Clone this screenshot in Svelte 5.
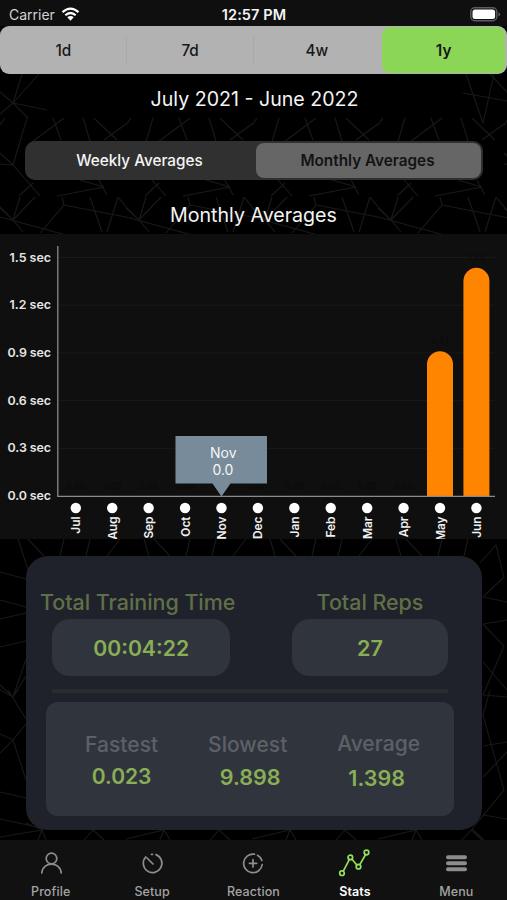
<script lang="ts">
    let ranges = ['1d', '7d', '4w', '1y'];
    let range: string = '1y';
    let modes = ['Weekly', 'Monthly'];
    let mode: string = 'Monthly';
    let selected: number = 4;

    let months = [
        {name: 'Jul', value: 0},
        {name: 'Aug', value: 0},
        {name: 'Sep', value: 0},
        {name: 'Oct', value: 0},
        {name: 'Nov', value: 0},
        {name: 'Dec', value: 0},
        {name: 'Jan', value: 0},
        {name: 'Feb', value: 0},
        {name: 'Mar', value: 0},
        {name: 'Apr', value: 0},
        {name: 'May', value: 0.91},
        {name: 'Jun', value: 1.435},
    ];
    let ticks = [1.5, 1.2, 0.9, 0.6, 0.3, 0];
    let totals = [
        {label: 'Total Training Time', value: '00:04:22', cls: 'time'},
        {label: 'Total Reps', value: '27', cls: 'reps'},
    ];
    let speeds = [
        {label: 'Fastest', value: '0.023', cls: 'fast'},
        {label: 'Slowest', value: '9.898', cls: 'slow'},
        {label: 'Average', value: '1.398', cls: 'avg'},
    ];
    let tabs = ['Profile', 'Setup', 'Reaction', 'Stats', 'Menu'];
    let tab: string = 'Stats';

    // chart geometry
    const base = 262;
    const toX = (i) => 75.8 + i * 36.42;
    const toY = (v) => base - v * 159;
    const bar = (i, v) => {
        const x = toX(i) - 13;
        const y = toY(v);
        return `M${x} ${base}V${y + 13}a13 13 0 0 1 26 0V${base}Z`;
    };
</script>

<main>
    <svg class="web" width="507" height="900" aria-hidden="true">
        <defs>
            <pattern id="net" width="126" height="79" patternUnits="userSpaceOnUse" y="118">
                <path d="M27 0L13 47L0 35M13 47L0 46M13 47L40 78M53 0L61 22M64 0L32 24M83 0L90 23M94 0L117 22M126 6L104 22M57 78L104 69L80 62M99 62L107 77M19 78L33 65M0 7L5 0" />
            </pattern>
            <pattern id="low" width="126" height="79" patternUnits="userSpaceOnUse" y="197">
                <path d="M20 0L13 23L35 0M0 11L13 23L23 35M40 36L64 8L62 0M64 8L126 20M0 20L66 38M90 0L102 35M118 0L107 35M118 0L126 10M0 10L13 23" />
            </pattern>
        </defs>
        <path d="M22 74L13 103L39 74M0 92L13 103L28 118M13 103L47 110M13 103L0 114M466 74L483 123L494 74M463 93L507 101M490 74L507 92" />
        <rect y="118" width="507" height="79" fill="url(#net)" />
        <rect y="197" width="507" height="38" fill="url(#low)" />
        <path d="M18 539L28 570M28 539L44 556M64 539L60 556M90 539L86 556M107 556L120 539M144 539L149 556M154 539L170 556M190 539L186 556M216 539L212 556M233 556L246 539M270 539L275 556M280 539L296 556M316 539L312 556M342 539L338 556M359 556L372 539M396 539L401 556M406 539L422 556M442 539L438 556M468 539L464 556" />
        <path d="M0 572L26 579M0 600L26 607M0 619L26 613M0 647L26 641M26 659L13 697L0 685M26 676L13 697L0 690M13 697L18 690M26 724L13 740L0 753M8 690L26 719M13 740L0 734M13 740L26 780M0 792L26 798M0 819L42 828M0 837L42 830L26 823" />
        <path d="M496 545L504 577L483 597L507 602M480 563L496 545M483 624L507 620M483 624L504 646L483 695M483 662L507 690M490 690L483 715L504 790L472 829L484 840M483 777L507 752M483 746L507 742M483 695L507 697M483 815L507 819" />
        <path d="M38 840L42 830L46 840M84 840L93 830L104 840M126 839L164 830L170 840M164 830L160 840M210 840L219 830L230 840M252 839L290 830L296 840M290 830L286 840M336 840L345 830L356 840M378 839L416 830L422 840M416 830L412 840M462 840L471 830L482 840" />
    </svg>

    <header>
        <span class="carrier">Carrier</span>
        <svg class="wifi" width="19" height="15" viewBox="0 0 19 15">
            <path d="M1.5 5.2Q9.500 -1.800 17.500 5.200M4.300 8.300Q9.500 3.700 14.700 8.300" />
            <path class="dot" d="M6.300 10.300Q9.500 7.700 12.700 10.300L9.500 13.700Z" />
        </svg>
        <span class="clock">12:57 PM</span>
        <svg class="battery" width="31" height="15" viewBox="0 0 31 15">
            <rect class="shell" x=".8" y=".8" width="26" height="13" rx="4" />
            <rect class="charge" x="2.500" y="2.500" width="22.600" height="9.600" rx="2.500" />
            <path class="cap" d="M28.500 5q3 2.300 0 4.600Z" />
        </svg>
    </header>

    <nav class="ranges">
        {#each ranges as r}
            <button class:on={r === range} on:click={() => range = r}>{r}</button>
        {/each}
    </nav>

    <h1>July 2021 - June 2022</h1>

    <div class="modes">
        {#each modes as m}
            <button class:on={m === mode} on:click={() => mode = m}>{m} Averages</button>
        {/each}
    </div>

    <h2>{mode} Averages</h2>

    <svg class="chart" width="507" height="305" viewBox="0 0 507 305">
        {#each ticks as t}
            {#if t > 0}
                <line class="grid" x1="58" x2="495" y1={toY(t)} y2={toY(t)} />
            {/if}
            <text class="tick" x={t > 1 ? 9.5 : 7.5} y={toY(t) + 4} textLength={t > 1 ? 41.5 : 43.5}>{t.toFixed(1)} sec</text>
        {/each}
        {#each months as m, i}
            <text class="ghost" x={toX(i)} y={toY(m.value) - 7}>{m.value.toFixed(2)}</text>
            {#if m.value > 0}
                <path class="bar" d={bar(i, m.value)} />
            {/if}
        {/each}
        <path class="axis" d="M57.800 12V262.300H495" />
        {#each months as m, i}
            <circle cx={toX(i)} cy="274" r="5.200" fill="#fff" />
            <text class="month" transform="translate({toX(i) + 4.500} 282.500) rotate(-90)">{m.name}</text>
        {/each}
        <path class="tip" d="M{toX(selected) - 46} 202h91.500v47.500h-36.500l-9 13l-9 -13h-37Z" />
        <text class="tiptext" x={toX(selected) + 1.800} y="224">{months[selected].name}</text>
        <text class="tiptext" x={toX(selected) + 1.500} y="241">{months[selected].value.toFixed(1)}</text>
    </svg>

    <section class="card">
        <div class="totals">
            {#each totals as t}
                <div class="total {t.cls}">
                    <p>{t.label}</p>
                    <div class="pill">{t.value}</div>
                </div>
            {/each}
        </div>
        <div class="rule"></div>
        <div class="speeds">
            {#each speeds as s}
                <div class="speed {s.cls}">
                    <p>{s.label}</p>
                    <b>{s.value}</b>
                </div>
            {/each}
        </div>
    </section>

    <footer>
        {#each tabs as t}
            <button class:on={t === tab} on:click={() => tab = t}>
                <svg width="34" height="32" viewBox="0 0 34 32">
                    {#if t === 'Profile'}
                        <circle cx="17.500" cy="11.500" r="5.300" />
                        <path d="M7.800 26C8.500 14.200 26.500 14.200 27.200 26" />
                    {:else if t === 'Setup'}
                        <path d="M10.700 10A9.300 9.300 0 1 0 21 7.600M12 11L18 17" />
                        <path d="M16.500 7.300h1" />
                    {:else if t === 'Reaction'}
                        <path d="M18.500 7.200A9.300 9.300 0 1 0 26.200 17.500M21.500 8.300A9.300 9.300 0 0 1 25.900 13.500M17 12.700v7.200M13.400 16.300h7.200" />
                    {:else if t === 'Stats'}
                        <path d="M5.200 24.300L11.400 12.400M14 12.300L19 18.200M21.800 17.700L27.600 7.500" />
                        <circle cx="4" cy="26.200" r="2.300" />
                        <circle cx="12.300" cy="10.400" r="2.300" />
                        <circle cx="20.500" cy="19.700" r="2.300" />
                        <circle cx="28.500" cy="5.500" r="2.300" />
                    {:else}
                        <path class="lines" d="M9 10.300h17M9 16.300h17M9 22.300h17" />
                    {/if}
                </svg>
                <span>{t}</span>
            </button>
        {/each}
    </footer>
</main>

<style>
    :global(body) {
        margin: 0;
        background: #000;
    }
    main {
        position: relative;
        isolation: isolate;
        width: 507px;
        height: 900px;
        overflow: hidden;
        display: flex;
        flex-direction: column;
        background: #000;
        color: #f4f4f4;
        font-family: Inter, "Liberation Sans", sans-serif;
    }
    .web {
        position: absolute;
        top: 0;
        left: 0;
        z-index: -1;
    }
    .web path {
        fill: none;
        stroke: #171919;
        stroke-width: 1.1;
    }
    button {
        border: 0;
        margin: 0;
        padding: 0;
        background: none;
        color: inherit;
        font-family: inherit;
    }
    p, h1, h2 {
        margin: 0;
    }
    header {
        height: 26px;
        flex: none;
        display: grid;
        grid-template-columns: 47px 1fr auto 1fr;
        align-items: center;
        padding: 2px 6px 0 9px;
        box-sizing: border-box;
        background: #0f0f0f;
        font-size: 14px;
    }
    .carrier {
        color: #d2d2d2;
        white-space: nowrap;
    }
    .wifi {
        margin-left: 5px;
    }
    .wifi path {
        fill: none;
        stroke: #fff;
        stroke-width: 2.2;
    }
    .wifi .dot {
        fill: #fff;
        stroke: none;
    }
    .clock {
        font-weight: 600;
        font-size: 14.5px;
        letter-spacing: .1px;
        margin: 0 22px 0 -27px;
    }
    .battery {
        justify-self: end;
    }
    .shell {
        fill: none;
        stroke: #5c5c5c;
        stroke-width: 1.4;
    }
    .charge {
        fill: #fff;
    }
    .cap {
        fill: #666;
    }
    .ranges {
        height: 48px;
        flex: none;
        display: grid;
        grid-template-columns: repeat(4, 1fr);
        background: #b2b2b2;
        border-radius: 9px;
    }
    .ranges button {
        color: #181818;
        font-size: 15.3px;
        font-weight: 500;
        background: linear-gradient(#a9a9a9, #a9a9a9) right center / 1px 28px no-repeat;
    }
    .ranges button:nth-child(3) {
        background: none;
    }
    .ranges button.on {
        margin: 1px 2px 1px 2px;
        border-radius: 8px;
        background: #8cd657;
        font-weight: 600;
    }
    h1, h2 {
        font-size: 19.6px;
        font-weight: 400;
        text-align: center;
        line-height: 24px;
    }
    h1 {
        margin-top: 13px;
        padding-left: 2px;
    }
    .modes {
        height: 39px;
        flex: none;
        margin: 30px 24px 0 25px;
        padding: 2px;
        box-sizing: border-box;
        display: grid;
        grid-template-columns: 229px 1fr;
        background: #303030;
        border-radius: 10px;
    }
    .modes button {
        font-size: 15.3px;
        font-weight: 500;
        padding-right: 4px;
    }
    .modes button.on {
        border-radius: 8px;
        background: #666;
        color: #131313;
        font-weight: 600;
        padding-right: 2px;
    }
    h2 {
        margin-top: 23px;
    }
    .chart {
        flex: none;
        margin-top: 7px;
        background: #0f0f0f;
    }
    .grid {
        stroke: #191919;
    }
    .tick {
        fill: #e6e6e6;
        font-size: 12.4px;
        font-weight: 600;
    }
    .ghost {
        fill: #0a0a0a;
        font-size: 9px;
        text-anchor: middle;
    }
    .bar {
        fill: #ff8400;
    }
    .axis {
        fill: none;
        stroke: #8b8b8b;
        stroke-width: 1.3;
    }
    .month {
        fill: #f0f0f0;
        font-size: 12px;
        font-weight: 600;
        letter-spacing: -.1px;
        text-anchor: end;
    }
    .tip {
        fill: #778b9a;
    }
    .tiptext {
        fill: #f5f5f5;
        font-size: 14px;
        text-anchor: middle;
    }
    .card {
        height: 274px;
        flex: none;
        margin: 17px 25px 0 26px;
        padding: 33px 28px 14px 20px;
        box-sizing: border-box;
        display: flex;
        flex-direction: column;
        background: #1f222a;
        border-radius: 22px;
    }
    .totals {
        display: flex;
        justify-content: space-between;
        margin: 0 6px 0 -6px;
    }
    .total {
        display: flex;
        flex-direction: column;
        align-items: center;
        color: #5f7049;
        font-size: 21.5px;
        font-weight: 500;
    }
    .total p {
        line-height: 27px;
        letter-spacing: -.05px;
        white-space: nowrap;
    }
    .pill {
        height: 57px;
        margin-top: 3px;
        border-radius: 18px;
        background: #30353d;
        color: #8aae55;
        font-weight: 600;
        line-height: 58px;
        text-align: center;
    }
    .time .pill {
        width: 178px;
        margin-left: 7px;
        font-size: 21.2px;
    }
    .reps .pill {
        width: 156px;
    }
    .rule {
        height: 4px;
        margin: 13px 6px 0;
        background: #2b2c30;
    }
    .speeds {
        height: 115px;
        margin-top: 9px;
        padding: 0 34px 0 39px;
        box-sizing: border-box;
        display: flex;
        justify-content: space-between;
        background: #30353d;
        border-radius: 12px;
    }
    .speed {
        padding-top: 29px;
        text-align: center;
        font-size: 21px;
    }
    .speed p {
        color: #5c6168;
        font-weight: 500;
        line-height: 27px;
    }
    .speed b {
        display: block;
        margin-top: 6px;
        color: #8aae55;
        font-weight: 600;
        line-height: 26px;
    }
    .fast p, .slow p {
        letter-spacing: .05px;
    }
    .slow b {
        padding-left: 5px;
        font-size: 21.500px;
    }
    .avg {
        padding-top: 28px;
    }
    .avg b {
        margin-top: 8px;
        padding-right: 4px;
        font-size: 21.500px;
    }
    footer {
        height: 60px;
        flex: none;
        margin-top: 10px;
        display: grid;
        grid-template-columns: repeat(5, 1fr);
        background: #111;
        color: #a3a3a3;
    }
    footer button {
        display: flex;
        flex-direction: column;
        align-items: center;
        font-size: 12.5px;
        font-weight: 500;
        letter-spacing: .1px;
    }
    footer svg {
        margin-top: 7px;
        fill: none;
        stroke: #8d8d8d;
        stroke-width: 1.7;
        stroke-linecap: round;
    }
    footer .lines {
        stroke-width: 4;
    }
    footer span {
        margin-top: 5px;
    }
    footer .on {
        color: #fff;
        font-weight: 600;
    }
    footer .on svg {
        stroke: #93e05d;
    }
</style>
